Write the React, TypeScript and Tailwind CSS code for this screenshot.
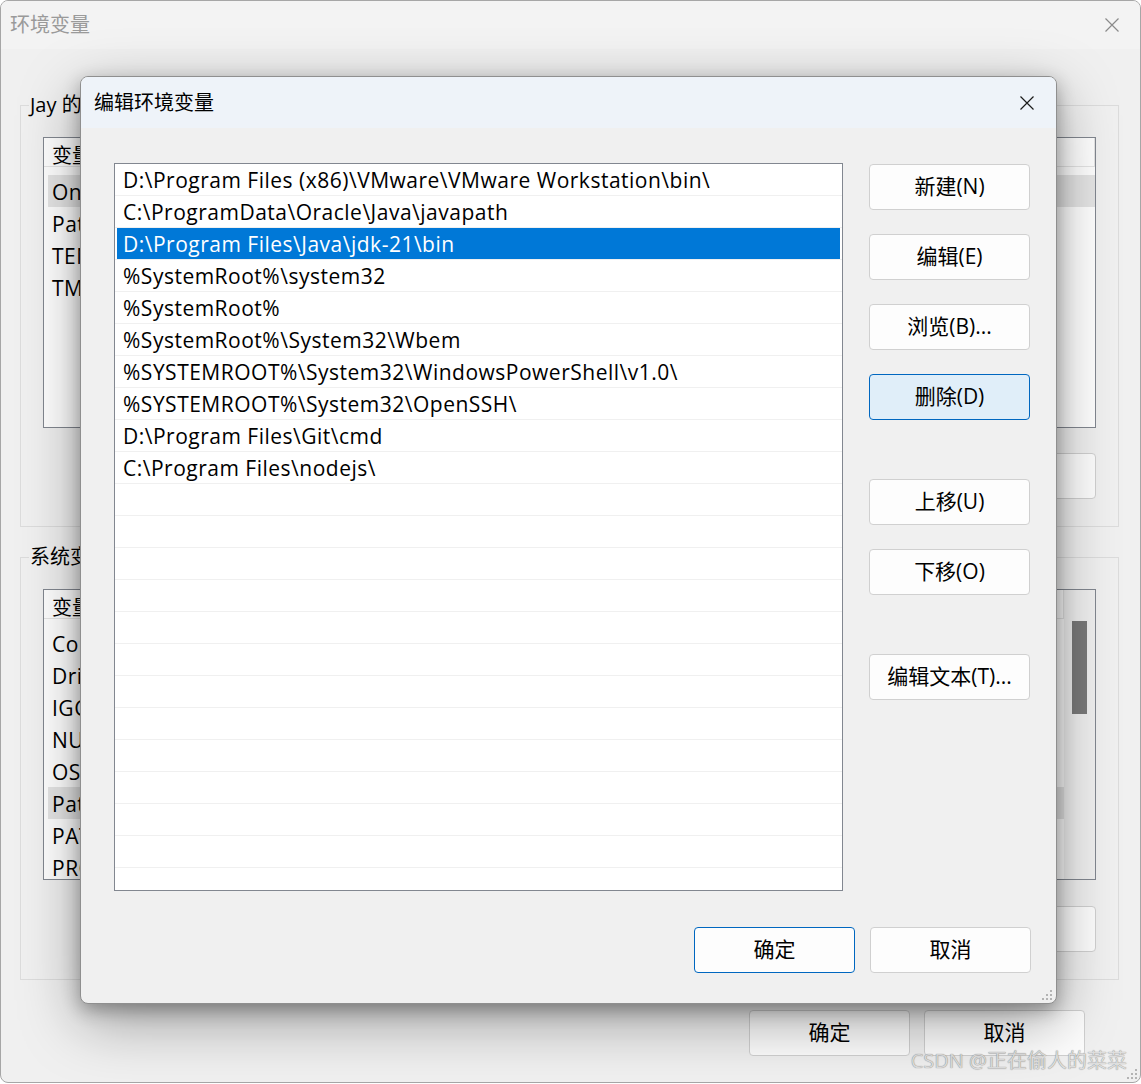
import React from 'react'

const paths = [
    'D:\\Program Files (x86)\\VMware\\VMware Workstation\\bin\\',
    'C:\\ProgramData\\Oracle\\Java\\javapath',
    'D:\\Program Files\\Java\\jdk-21\\bin',
    '%SystemRoot%\\system32',
    '%SystemRoot%',
    '%SystemRoot%\\System32\\Wbem',
    '%SYSTEMROOT%\\System32\\WindowsPowerShell\\v1.0\\',
    '%SYSTEMROOT%\\System32\\OpenSSH\\',
    'D:\\Program Files\\Git\\cmd',
    'C:\\Program Files\\nodejs\\',
]

const userVars = [
    ['OneDrive', 'C:\\Users\\Jay\\OneDrive'],
    ['Path', 'C:\\Users\\Jay\\AppData\\Local\\Microsoft\\WindowsApps;'],
    ['TEMP', 'C:\\Users\\Jay\\AppData\\Local\\Temp'],
    ['TMP', 'C:\\Users\\Jay\\AppData\\Local\\Temp'],
]

const sysVars = [
    ['ComSpec', 'C:\\Windows\\system32\\cmd.exe'],
    ['DriverData', 'C:\\Windows\\System32\\Drivers\\DriverData'],
    ['IGCCSVC_DB', 'AQAAANCMnd8BFdERjHoAwE/Cl+s'],
    ['NUMBER_OF_PROCESSORS', '16'],
    ['OS', 'Windows_NT'],
    ['Path', 'D:\\Program Files (x86)\\VMware\\VMware Workstation\\bin\\'],
    ['PATHEXT', '.COM;.EXE;.BAT;.CMD;.VBS;.VBE;.JS;.JSE;.WSF;.WSH;.MSC'],
    ['PROCESSOR_ARCHITECTURE', 'AMD64'],
]

function CloseIcon({ color }: { color: string }) {
    return (
        <svg width="16" height="16" viewBox="0 0 16 16" fill="none">
            <path d="M1.5 1.5L14.5 14.5M14.5 1.5L1.5 14.5" stroke={color} strokeWidth="1.2" />
        </svg>
    )
}

function Grip() {
    return (
        <svg width="12" height="12" viewBox="0 0 12 12">
            {[[9, 1], [5, 5], [9, 5], [1, 9], [5, 9], [9, 9]].map(([x, y], i) => (
                <rect key={i} x={x} y={y} width="2" height="2" fill="#b4b4b4" />
            ))}
        </svg>
    )
}

function WinButton({ label, focused, primary }: { label: string; focused?: boolean; primary?: boolean }) {
    let cls = 'bg-[#fdfdfd] border-[#d0d0d0]'
    if (focused) cls = 'bg-[#e0eef9] border-[#0067c0]'
    if (primary) cls = 'bg-[#fdfdfd] border-[#0067c0]'
    return (
        <div className={`w-[161px] h-[46px] shrink-0 rounded-[4px] border flex items-center justify-center text-[21px] text-black ${cls}`}>
            {label}
        </div>
    )
}

function VarList({ rows, selected, scrollbar }: { rows: string[][]; selected: number; scrollbar?: boolean }) {
    return (
        <div className="ml-[22px] mt-[19px] w-[1053px] h-[291px] border border-[#828790] bg-white flex overflow-hidden">
            <div className="flex-1 flex flex-col">
                <div className="h-[29px] shrink-0 border-b border-[#e5e5e5] flex text-[20px] leading-[20px]">
                    <div className="w-[300px] pl-[8px] pt-[8px] border-r border-[#e5e5e5]">变量</div>
                    <div className="flex-1 pl-[8px] pt-[8px] border-r border-[#e5e5e5]">值</div>
                </div>
                <div className="pt-[8px] pl-[4px] flex flex-col">
                    {rows.map(([k, v], i) => (
                        <div key={k} className={`h-[32px] pt-[3px] flex items-center text-[21px] tracking-[0.5px] whitespace-nowrap ${i === selected ? 'bg-[#e5e5e5]' : ''}`}>
                            <span className="w-[296px] pl-[4px]">{k}</span>
                            <span className="pl-[8px]">{v}</span>
                        </div>
                    ))}
                </div>
            </div>
            {scrollbar && (
                <div className="w-[31px] shrink-0 bg-[#f0f0f0] flex justify-center pt-[31px]">
                    <div className="w-[15px] h-[93px] bg-[#7a7a7a]" />
                </div>
            )}
        </div>
    )
}

function ButtonRow({ top }: { top: string }) {
    return (
        <div className={`flex justify-end gap-[14px] pr-[22px] ${top}`}>
            <WinButton label="新建(W)..." />
            <WinButton label="编辑(I)..." />
            <WinButton label="删除(L)" />
        </div>
    )
}

function EditDialog() {
    return (
        <div className="absolute left-[80px] top-[76px] w-[977px] h-[928px] rounded-[8px] border border-[#8f8f8f] bg-[#f0f0f0] overflow-hidden flex flex-col shadow-[0_6px_18px_rgba(0,0,0,0.3),0_18px_60px_rgba(0,0,0,0.35)]">
            <div className="h-[51px] shrink-0 bg-[#eef3f9] flex items-center justify-between pl-[13px] pr-[21px]">
                <span className="text-[20px] text-black">编辑环境变量</span>
                <CloseIcon color="#1b1b1b" />
            </div>
            <div className="flex pt-[35px] pl-[33px]">
                <div className="w-[729px] h-[728px] border border-[#828790] bg-white overflow-hidden flex flex-col">
                    {Array.from({ length: 23 }).map((_, i) => {
                        const sel = i === 2
                        return (
                            <div key={i} className="h-[32px] shrink-0 border-b border-[#f0f0f0] flex">
                                <div className={`flex-1 mx-[2px] pt-[3px] flex items-center pl-[6px] text-[21px] tracking-[0.5px] whitespace-nowrap ${sel ? 'bg-[#0078d7] text-white' : 'text-black'}`}>
                                    {paths[i] ?? ''}
                                </div>
                            </div>
                        )
                    })}
                </div>
                <div className="ml-[26px] pt-[1px] flex flex-col">
                    <WinButton label="新建(N)" />
                    <div className="mt-[24px]"><WinButton label="编辑(E)" /></div>
                    <div className="mt-[24px]"><WinButton label="浏览(B)..." /></div>
                    <div className="mt-[24px]"><WinButton label="删除(D)" focused /></div>
                    <div className="mt-[59px]"><WinButton label="上移(U)" /></div>
                    <div className="mt-[24px]"><WinButton label="下移(O)" /></div>
                    <div className="mt-[59px]"><WinButton label="编辑文本(T)..." /></div>
                </div>
            </div>
            <div className="flex justify-end gap-[15px] pr-[25px] mt-[36px]">
                <WinButton label="确定" primary />
                <WinButton label="取消" />
            </div>
            <div className="absolute right-[3px] bottom-[2px]">
                <Grip />
            </div>
        </div>
    )
}

export default function App() {
    return (
        <div className="relative w-[1141px] h-[1084px] bg-white font-['Open_Sans','Noto_Sans_CJK_SC',sans-serif] overflow-hidden">
            {/* Background window: 环境变量 */}
            <div className="h-[1083px] rounded-[8px] border border-[#a6a6a6] bg-[#f0f0f0] flex flex-col overflow-hidden">
                <div className="h-[48px] shrink-0 bg-[#f3f3f3] flex items-center justify-between pl-[9px] pr-[20px]">
                    <span className="text-[20px] text-[#9a9a9a]">环境变量</span>
                    <CloseIcon color="#8a8a8a" />
                </div>
                <div className="pt-[56px] pl-[19px]">
                    <div className="w-[1099px] border border-[#dcdcdc] pb-[27px]">
                        <div className="-mt-[14px] ml-[8px] w-fit px-[1px] bg-[#f0f0f0] text-[20px] leading-[26px] text-black">Jay 的用户变量(U)</div>
                        <VarList rows={userVars} selected={0} />
                        <ButtonRow top="mt-[25px]" />
                    </div>
                    <div className="mt-[30px] w-[1099px] border border-[#dcdcdc] pb-[27px]">
                        <div className="-mt-[14px] ml-[8px] w-fit px-[1px] bg-[#f0f0f0] text-[20px] leading-[26px] text-black">系统变量(S)</div>
                        <VarList rows={sysVars} selected={5} scrollbar />
                        <ButtonRow top="mt-[26px]" />
                    </div>
                    <div className="mt-[30px] flex justify-end gap-[14px] pr-[55px]">
                        <WinButton label="确定" />
                        <WinButton label="取消" />
                    </div>
                </div>
            </div>
            <div className="absolute right-[3px] bottom-[4px]">
                <Grip />
            </div>
            <div className="absolute right-[14px] bottom-[8px] text-[20px] text-[#dedede] [text-shadow:0_0_1px_#6e6e6e] whitespace-nowrap">
                CSDN @正在偷人的菜菜
            </div>

            <EditDialog />
        </div>
    )
}
